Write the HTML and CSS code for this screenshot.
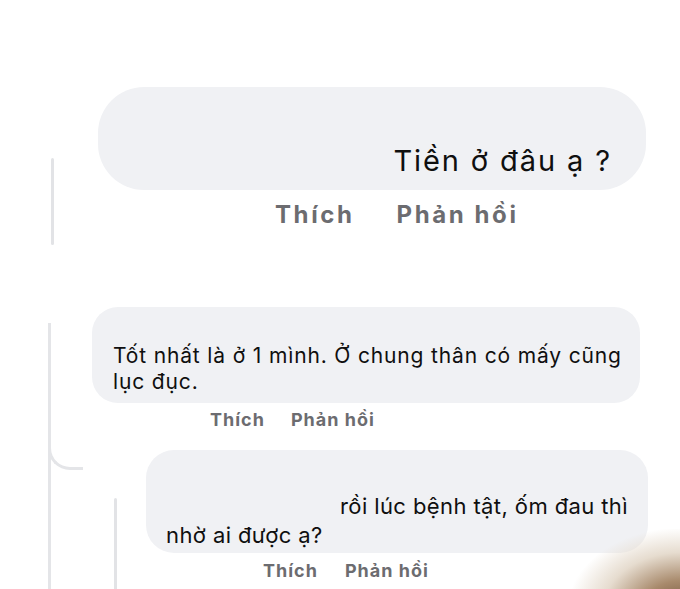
FILE: index.html
```html
<!DOCTYPE html>
<html lang="vi">
<head>
  <meta charset="UTF-8">
  <meta name="viewport" content="width=device-width, initial-scale=1.0">
  <title>Bình luận</title>
  <link rel="stylesheet" href="styles.css">
</head>
<body>
  <div class="page">
    <!-- first comment -->
    <section class="comment comment-top">
      <div class="rail rail-top"><span class="line"></span></div>
      <div class="content">
        <div class="bubble bubble-big">
          <p>Tiền ở đâu ạ ?</p>
        </div>
        <div class="actions actions-big">
          <span>Thích</span>
          <span>Phản hồi</span>
        </div>
      </div>
    </section>

    <!-- second comment with a reply -->
    <section class="comment comment-second">
      <div class="rail rail-main"><span class="elbow"></span></div>
      <div class="content">
        <div class="bubble bubble-mid">
          <p>Tốt nhất là ở 1 mình. Ở chung thân có mấy cũng lục đục.</p>
        </div>
        <div class="actions actions-mid">
          <span>Thích</span>
          <span>Phản hồi</span>
        </div>

        <div class="comment comment-reply">
          <div class="rail rail-reply"><span class="line"></span></div>
          <div class="content">
            <div class="bubble bubble-reply">
              <p>rồi lúc bệnh tật, ốm đau thì nhờ ai được ạ?</p>
            </div>
            <div class="actions actions-reply">
              <span>Thích</span>
              <span>Phản hồi</span>
            </div>
          </div>
        </div>
      </div>
    </section>

    <div class="smudge"></div>
  </div>
</body>
</html>
```

FILE: styles.css
```css
/* Facebook style comment thread */
body {
  margin: 0;
  background: #fff;
  font-family: Inter, "Noto Sans", sans-serif;
  color: #0f0f0f;
}
.page {
  position: relative;
  width: 680px;
  height: 589px;
  overflow: hidden;
  padding-top: 87px;
  box-sizing: border-box;
}
p {
  margin: 0;
}
.comment {
  display: flex;
}
.content {
  display: flex;
  flex-direction: column;
}
.rail {
  flex-shrink: 0;
}
.line {
  display: block;
  width: 3px;
  background: #e2e3e6;
  border-radius: 2px;
}

/* top comment */
.rail-top {
  width: 98px;
}
.rail-top .line {
  margin-left: 51px;
  margin-top: 71px;
  height: 87px;
}
.bubble {
  background: #f0f1f4;
}
.bubble-big {
  width: 548px;
  height: 103px;
  box-sizing: border-box;
  border-radius: 46px;
  display: flex;
  align-items: flex-end;
  justify-content: flex-end;
  padding: 0 34px 12px 0;
  font-size: 29px;
  line-height: 34px;
  letter-spacing: 1.9px;
}
.actions {
  display: flex;
  font-weight: 700;
  color: #6c6c70;
}
.actions-big {
  margin: 12px 0 0 177px;
  gap: 42px;
  font-size: 24px;
  line-height: 26px;
  letter-spacing: 2.6px;
}

/* second comment */
.comment-second {
  margin-top: 62px;
}
.rail-main {
  width: 44px;
  margin: 16px 0 0 48px;
  border-left: 3px solid #e4e5e8;
  box-sizing: border-box;
}
.elbow {
  display: block;
  width: 32px;
  height: 30px;
  margin: 114px 0 0 -3px;
  border-left: 3px solid #e4e5e8;
  border-bottom: 3px solid #e4e5e8;
  border-bottom-left-radius: 22px;
}
.bubble-mid {
  width: 548px;
  height: 96px;
  box-sizing: border-box;
  border-radius: 26px;
  padding: 36px 10px 0 21px;
  font-size: 21px;
  line-height: 26px;
  letter-spacing: 0.85px;
}
.actions-mid,
.actions-reply {
  font-size: 18px;
  line-height: 22px;
  letter-spacing: 1px;
}
.actions-mid {
  margin: 6px 0 0 118px;
  gap: 26px;
}

/* reply */
.comment-reply {
  margin-top: 19px;
}
.rail-reply {
  width: 54px;
}
.rail-reply .line {
  margin: 48px 0 0 22px;
  height: 120px;
}
.bubble-reply {
  width: 502px;
  height: 103px;
  box-sizing: border-box;
  border-radius: 28px;
  padding: 42px 14px 0 20px;
  font-size: 22px;
  line-height: 29px;
  letter-spacing: 0.4px;
  text-indent: 174px;
}
.actions-reply {
  margin: 7px 0 0 117px;
  gap: 27px;
}

/* blurred photo edge in the corner */
.smudge {
  position: absolute;
  right: -40px;
  bottom: -40px;
  width: 150px;
  height: 100px;
  background: radial-gradient(ellipse at 75% 80%, #6e5038 0%, #a88a6c 25%, #e6dccf 50%, rgba(255, 255, 255, 0) 72%);
}
```
